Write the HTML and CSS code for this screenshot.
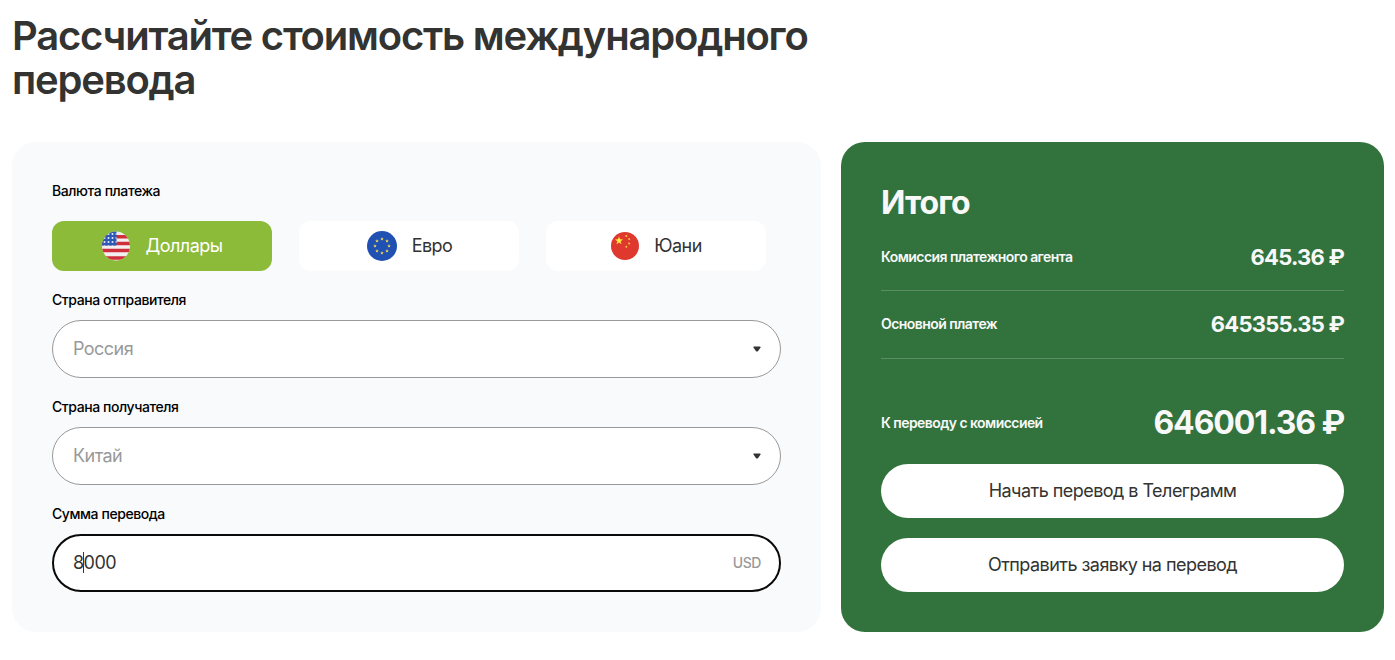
FILE: index.html
```
<!DOCTYPE html>
<html lang="ru">
<head>
  <meta charset="UTF-8" />
  <meta name="viewport" content="width=device-width, initial-scale=1.0"/>
  <title>Калькулятор международного перевода</title>
  <link rel="stylesheet" href="styles.css">
</head>
<body>
  <div class="container">
    <h1>Рассчитайте стоимость международного перевода</h1>

    <div class="calculator">
      <form class="calc-form" id="calc-form">
        <div class="label currency-label">Валюта платежа</div>
        <div class="currencies">
          <button type="button" class="currency active">
            <svg class="flag" width="28" height="30" viewBox="0 0 28 30">
              <defs>
                <clipPath id="usa-clip"><ellipse cx="14" cy="15" rx="14" ry="14.5"/></clipPath>
                <pattern id="usa-stars" width="4" height="4" patternUnits="userSpaceOnUse">
                  <circle cx="2.5" cy="3" r="1" fill="#e4ebf8"/>
                </pattern>
              </defs>
              <g clip-path="url(#usa-clip)">
                <rect width="28" height="30" fill="#f3eff0"/>
                <path d="M0 5.7h28M0 12.5h28M0 19.5h28M0 27h28" stroke="#cf2f3a" stroke-width="3.4"/>
                <rect width="14.5" height="14.6" fill="#2b59b5"/>
                <rect width="14.5" height="14.6" fill="url(#usa-stars)"/>
              </g>
            </svg>
            <span>Доллары</span>
          </button>
          <button type="button" class="currency">
            <svg class="flag" width="30" height="30" viewBox="0 0 30 30">
              <defs>
                <path id="star" d="M0-1.9L.5-.6 1.8-.6.8.3 1.2 1.6 0 .8-1.2 1.6-.8.3-1.8-.6-.5-.6z"/>
              </defs>
              <circle cx="15" cy="15" r="15" fill="#2050b1"/>
              <g fill="#f6dc4e">
                <use href="#star" x="15" y="8"/>
                <use href="#star" x="20" y="10"/>
                <use href="#star" x="22" y="15"/>
                <use href="#star" x="20" y="20"/>
                <use href="#star" x="15" y="22"/>
                <use href="#star" x="10" y="20"/>
                <use href="#star" x="8" y="15"/>
                <use href="#star" x="10" y="10"/>
              </g>
            </svg>
            <span>Евро</span>
          </button>
          <button type="button" class="currency">
            <svg class="flag" width="28" height="28" viewBox="0 0 28 28">
              <circle cx="14" cy="14" r="14" fill="#df392f"/>
              <path d="M8 4.4l1 2.9 3.1.1-2.5 1.9.9 3L8 10.5l-2.5 1.8.9-3-2.5-1.9 3.1-.1z" fill="#fdf03c"/>
              <g fill="#f5c63a">
                <circle cx="15.3" cy="4" r="1"/>
                <circle cx="18.1" cy="7.1" r="1"/>
                <circle cx="18.1" cy="11.4" r="1"/>
                <circle cx="15.3" cy="14.7" r="1"/>
              </g>
            </svg>
            <span>Юани</span>
          </button>
        </div>

        <label class="label" for="sender">Страна отправителя</label>
        <div class="field">
          <input type="text" id="sender" placeholder="Россия" />
          <svg class="arrow" width="8" height="6" viewBox="0 0 8 6"><path d="M.9.4h6.2q.7.3.4 1L5.1 5Q4 6 2.9 5L.5 1.4Q.2.7.9.4z"/></svg>
        </div>

        <label class="label" for="receiver">Страна получателя</label>
        <div class="field">
          <input type="text" id="receiver" placeholder="Китай" />
          <svg class="arrow" width="8" height="6" viewBox="0 0 8 6"><path d="M.9.4h6.2q.7.3.4 1L5.1 5Q4 6 2.9 5L.5 1.4Q.2.7.9.4z"/></svg>
        </div>

        <label class="label">Сумма перевода</label>
        <div class="field focused">
          <div class="amount">8<i class="caret"></i>000</div>
          <span class="unit">USD</span>
        </div>
      </form>

      <div class="total">
        <h2>Итого</h2>
        <div class="row">
          <span>Комиссия платежного агента</span>
          <b>645.36 ₽</b>
        </div>
        <div class="row main-row">
          <span>Основной платеж</span>
          <b>645355.35 ₽</b>
        </div>
        <div class="row sum">
          <span>К переводу с комиссией</span>
          <b>646001.36 ₽</b>
        </div>
        <button type="button" class="action">Начать перевод в Телеграмм</button>
        <button type="button" class="action">Отправить заявку на перевод</button>
      </div>
    </div>
  </div>
</body>
</html>
```
FILE: styles.css
```
* {
  box-sizing: border-box;
}

body {
  font-family: Inter, sans-serif;
  background: #fff;
  color: #333331;
  margin: 0;
  padding: 14px 11px 28px 12px;
}

h1 {
  max-width: 830px;
  margin: 0 0 40px;
  font-size: 40px;
  line-height: 44px;
  font-weight: 600;
  letter-spacing: -0.03em;
}

.calculator {
  display: grid;
  grid-template-columns: 809px 1fr;
  gap: 20px;
  height: 490px;
}

.calc-form {
  background: #f8fafc;
  border-radius: 24px;
  padding: 40px;
}

.label {
  display: block;
  margin-bottom: 11px;
  font-size: 14px;
  line-height: 18px;
  font-weight: 500;
  letter-spacing: -0.03em;
  color: #000;
}

.currency-label {
  margin-bottom: 21px;
}

.currencies {
  display: flex;
  gap: 27px;
  margin-bottom: 20px;
}

button {
  border: none;
  cursor: pointer;
  font-family: inherit;
  font-size: 18px;
  letter-spacing: -0.03em;
  color: #333331;
  background: #fff;
}

.currency {
  display: flex;
  align-items: center;
  justify-content: center;
  gap: 15px;
  width: 220px;
  height: 50px;
  padding: 0 0 0 1px;
  border-radius: 12px;
}

.currency span {
  padding-bottom: 2px;
}

.currency.active {
  gap: 16px;
  padding: 0;
  background: #8cba39;
  color: #fff;
}

.flag {
  flex-shrink: 0;
}

.field {
  display: flex;
  align-items: center;
  width: 729px;
  height: 58px;
  margin-bottom: 20px;
  padding: 0 19px 0 20px;
  border: 1px solid #999;
  border-radius: 29px;
  background: #fff;
}

.field.focused {
  margin-bottom: 0;
  border: 2px solid #0a0a0a;
  padding: 0 18px 0 19px;
}

.field input,
.amount {
  flex: 1;
  padding: 0 0 2px;
  border: none;
  outline: none;
  background: none;
  font-family: inherit;
  font-size: 18px;
  letter-spacing: -0.03em;
  color: #333331;
}

.field input::placeholder {
  color: #999;
}

.arrow {
  fill: #333331;
}

.caret {
  display: inline-block;
  width: 1px;
  height: 21px;
  margin: 0 0 0 -1px;
  vertical-align: -4px;
  background: #333331;
}

.unit {
  padding-bottom: 2px;
  font-size: 14px;
  font-weight: 500;
  letter-spacing: -0.03em;
  color: #999;
}

.total {
  background: #32723d;
  border-radius: 24px;
  padding: 40px;
  color: #f8f8f8;
}

h2 {
  margin: 0;
  font-size: 32px;
  line-height: 42px;
  font-weight: 700;
  letter-spacing: -0.03em;
}

.row {
  display: flex;
  align-items: center;
  justify-content: space-between;
  height: 67px;
  border-bottom: 1px solid #5b8e64;
  font-size: 14px;
  font-weight: 600;
  letter-spacing: -0.04em;
}

.row span {
  padding-bottom: 2px;
}

.row b {
  font-size: 22px;
  font-weight: 700;
  letter-spacing: -0.035em;
}

.row.main-row {
  height: 68px;
  padding-bottom: 1px;
}

.row.sum {
  height: 82px;
  margin-top: 23px;
  padding-bottom: 2px;
  border-bottom: none;
}

.row.sum span {
  padding-bottom: 0;
}

.row.sum b {
  font-size: 32px;
}

.action {
  display: block;
  width: 100%;
  height: 54px;
  padding: 0 0 1px;
  border-radius: 27px;
}

.action + .action {
  margin-top: 20px;
}
```
